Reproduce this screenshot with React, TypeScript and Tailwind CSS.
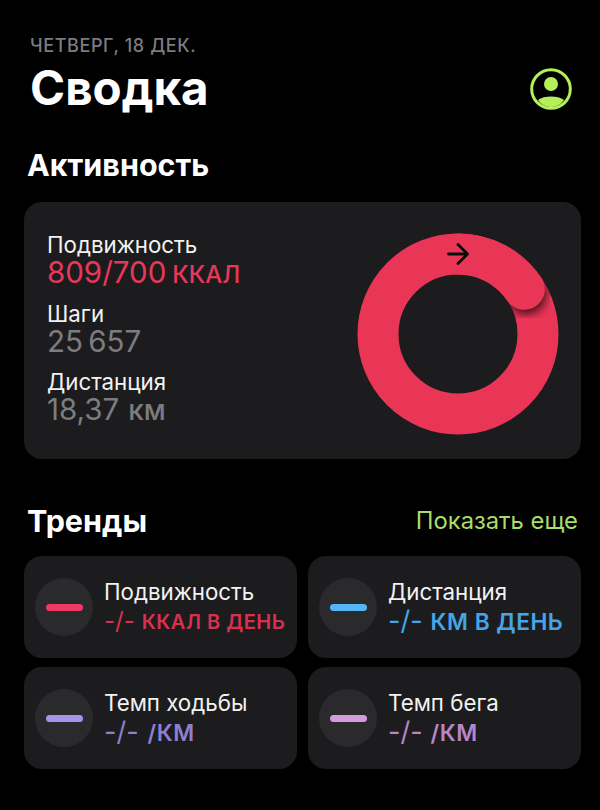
import React from "react";

// Activity ring: full circle plus the overlapping part beyond the goal
function Ring() {
  const cx = 102, cy = 102, r = 80;
  const a = (56 * Math.PI) / 180;
  const ex = cx + r * Math.sin(a);
  const ey = cy - r * Math.cos(a);
  return (
    <svg width="204" height="204" viewBox="0 0 204 204" className="mt-[6px] shrink-0">
      <defs>
        <filter id="capShadow" x="-50%" y="-50%" width="200%" height="200%">
          <feGaussianBlur stdDeviation="5" />
        </filter>
        <mask id="ringMask">
          <circle cx={cx} cy={cy} r={r} fill="none" stroke="#fff" strokeWidth="41" />
        </mask>
      </defs>
      <circle cx={cx} cy={cy} r={r} fill="none" stroke="#ea3656" strokeWidth="41" />
      <g mask="url(#ringMask)">
        <circle cx={ex + 2} cy={ey + 5} r="20" fill="#000" fillOpacity="0.7" filter="url(#capShadow)" />
      </g>
      <path
        d={`M ${cx} ${cy - r} A ${r} ${r} 0 0 1 ${ex} ${ey}`}
        fill="none"
        stroke="#ea3656"
        strokeWidth="41"
        strokeLinecap="round"
      />
      <path
        d={`M ${cx - 9.5} ${cy - r} H ${cx + 9} M ${cx} ${cy - r - 9.5} L ${cx + 9.5} ${cy - r} L ${cx} ${cy - r + 9.5}`}
        fill="none"
        stroke="#0a0a0a"
        strokeWidth="2.8"
        strokeLinecap="round"
        strokeLinejoin="round"
      />
    </svg>
  );
}

function Stat({ label, children }: { label: string; children: React.ReactNode }) {
  return (
    <div className="flex flex-col">
      <div className="text-[22.3px] leading-[26px] text-[#f2f2f2]">{label}</div>
      <div className="flex h-[28px] items-baseline leading-[28px] whitespace-nowrap">{children}</div>
    </div>
  );
}

function TrendCard({
  title,
  value,
  unit,
  bar,
  valueClass,
  unitClass,
}: {
  title: string;
  value: string;
  unit: string;
  bar: string;
  valueClass: string;
  unitClass: string;
}) {
  return (
    <div className="flex h-[102px] items-center rounded-[18px] bg-[#1c1c1e] pl-[11px]">
      <div className="flex h-[58px] w-[58px] shrink-0 items-center justify-center rounded-full bg-[#2a2a2c]">
        <div className={`h-[7px] w-[37px] rounded-full ${bar}`} />
      </div>
      <div className="ml-[11px] flex flex-col">
        <div className="text-[22.3px] leading-[26px] text-[#f2f2f2]">{title}</div>
        <div className="mt-[2px] flex items-baseline leading-[28px] whitespace-nowrap">
          <span className={valueClass}>{value}</span>
          <span className={unitClass}>{unit}</span>
        </div>
      </div>
    </div>
  );
}

export default function App() {
  return (
    <div className="h-[810px] w-[600px] overflow-hidden bg-black pr-[19px] pl-[24px] font-['Inter','Liberation_Sans',sans-serif]">
      <div className="flex items-start justify-between pt-[37px] pr-[9px] pl-[6px]">
        <div>
          <div className="text-[18px] leading-[18px] font-medium tracking-[0.6px] text-[#7c7c80]">ЧЕТВЕРГ, 18 ДЕК.</div>
          <h1 className="mt-[5px] text-[47.5px] leading-[56px] font-bold text-white">Сводка</h1>
        </div>
        <svg width="42" height="42" viewBox="0 0 42 42" className="mt-[31px]">
          <circle cx="21" cy="21" r="19.3" fill="none" stroke="#b5f05a" strokeWidth="3" />
          <circle cx="21" cy="16" r="7" fill="#b5f05a" />
          <path d="M8 32 C11 29.5 16 28.5 21 28.5 C26 28.5 31 29.5 34 32 C31 36.5 26 39 21 39 C16 39 11 36.5 8 32 Z" fill="#b5f05a" />
        </svg>
      </div>

      <h2 className="mt-[31px] pl-[3px] text-[30.5px] leading-[36px] font-bold text-white">Активность</h2>

      <section className="mt-[19px] flex h-[257px] items-center justify-between rounded-[18px] bg-[#1c1c1e] pr-[21px] pl-[23px]">
        <div className="mb-[6px] flex flex-col gap-[14.5px]">
          <Stat label="Подвижность">
            <span className="text-[29.5px] text-[#e8385a]">809/700</span>
            <span className="ml-[6px] text-[24px] font-medium text-[#e8385a]">ККАЛ</span>
          </Stat>
          <Stat label="Шаги">
            <span className="text-[29.5px] text-[#7d7d80]">25{"\u202F"}657</span>
          </Stat>
          <Stat label="Дистанция">
            <span className="text-[29.5px] text-[#7d7d80]">18,37</span>
            <span className="ml-[9px] text-[28px] font-medium text-[#7d7d80]">км</span>
          </Stat>
        </div>
        <Ring />
      </section>

      <div className="mt-[44px] flex items-center justify-between pr-[3px] pl-[3px]">
        <h2 className="text-[30.5px] leading-[36px] font-bold text-white">Тренды</h2>
        <span className="text-[23.8px] leading-[28px] text-[#a9dd6a]">Показать еще</span>
      </div>

      <section className="mt-[17px] grid grid-cols-2 gap-x-[11px] gap-y-[9px]">
        <TrendCard
          title="Подвижность"
          value="-/-"
          unit="ККАЛ В ДЕНЬ"
          bar="bg-[#ee3a5f]"
          valueClass="text-[24px] text-[#d8314f]"
          unitClass="ml-[7px] text-[20px] font-semibold tracking-[0.5px] text-[#d8314f]"
        />
        <TrendCard
          title="Дистанция"
          value="-/-"
          unit="КМ В ДЕНЬ"
          bar="bg-[#55b4f5]"
          valueClass="text-[27px] text-[#45a5e6]"
          unitClass="ml-[8px] text-[22.7px] font-semibold tracking-[0.5px] text-[#45a5e6]"
        />
        <TrendCard
          title="Темп ходьбы"
          value="-/-"
          unit="/КМ"
          bar="bg-[#a794e8]"
          valueClass="text-[27px] text-[#8f7fd0]"
          unitClass="ml-[9px] text-[22.7px] font-semibold tracking-[0.5px] text-[#8f7fd0]"
        />
        <TrendCard
          title="Темп бега"
          value="-/-"
          unit="/КМ"
          bar="bg-[#d49ade]"
          valueClass="text-[27px] text-[#b885c6]"
          unitClass="ml-[8px] text-[22.7px] font-semibold tracking-[0.5px] text-[#b885c6]"
        />
      </section>
    </div>
  );
}
